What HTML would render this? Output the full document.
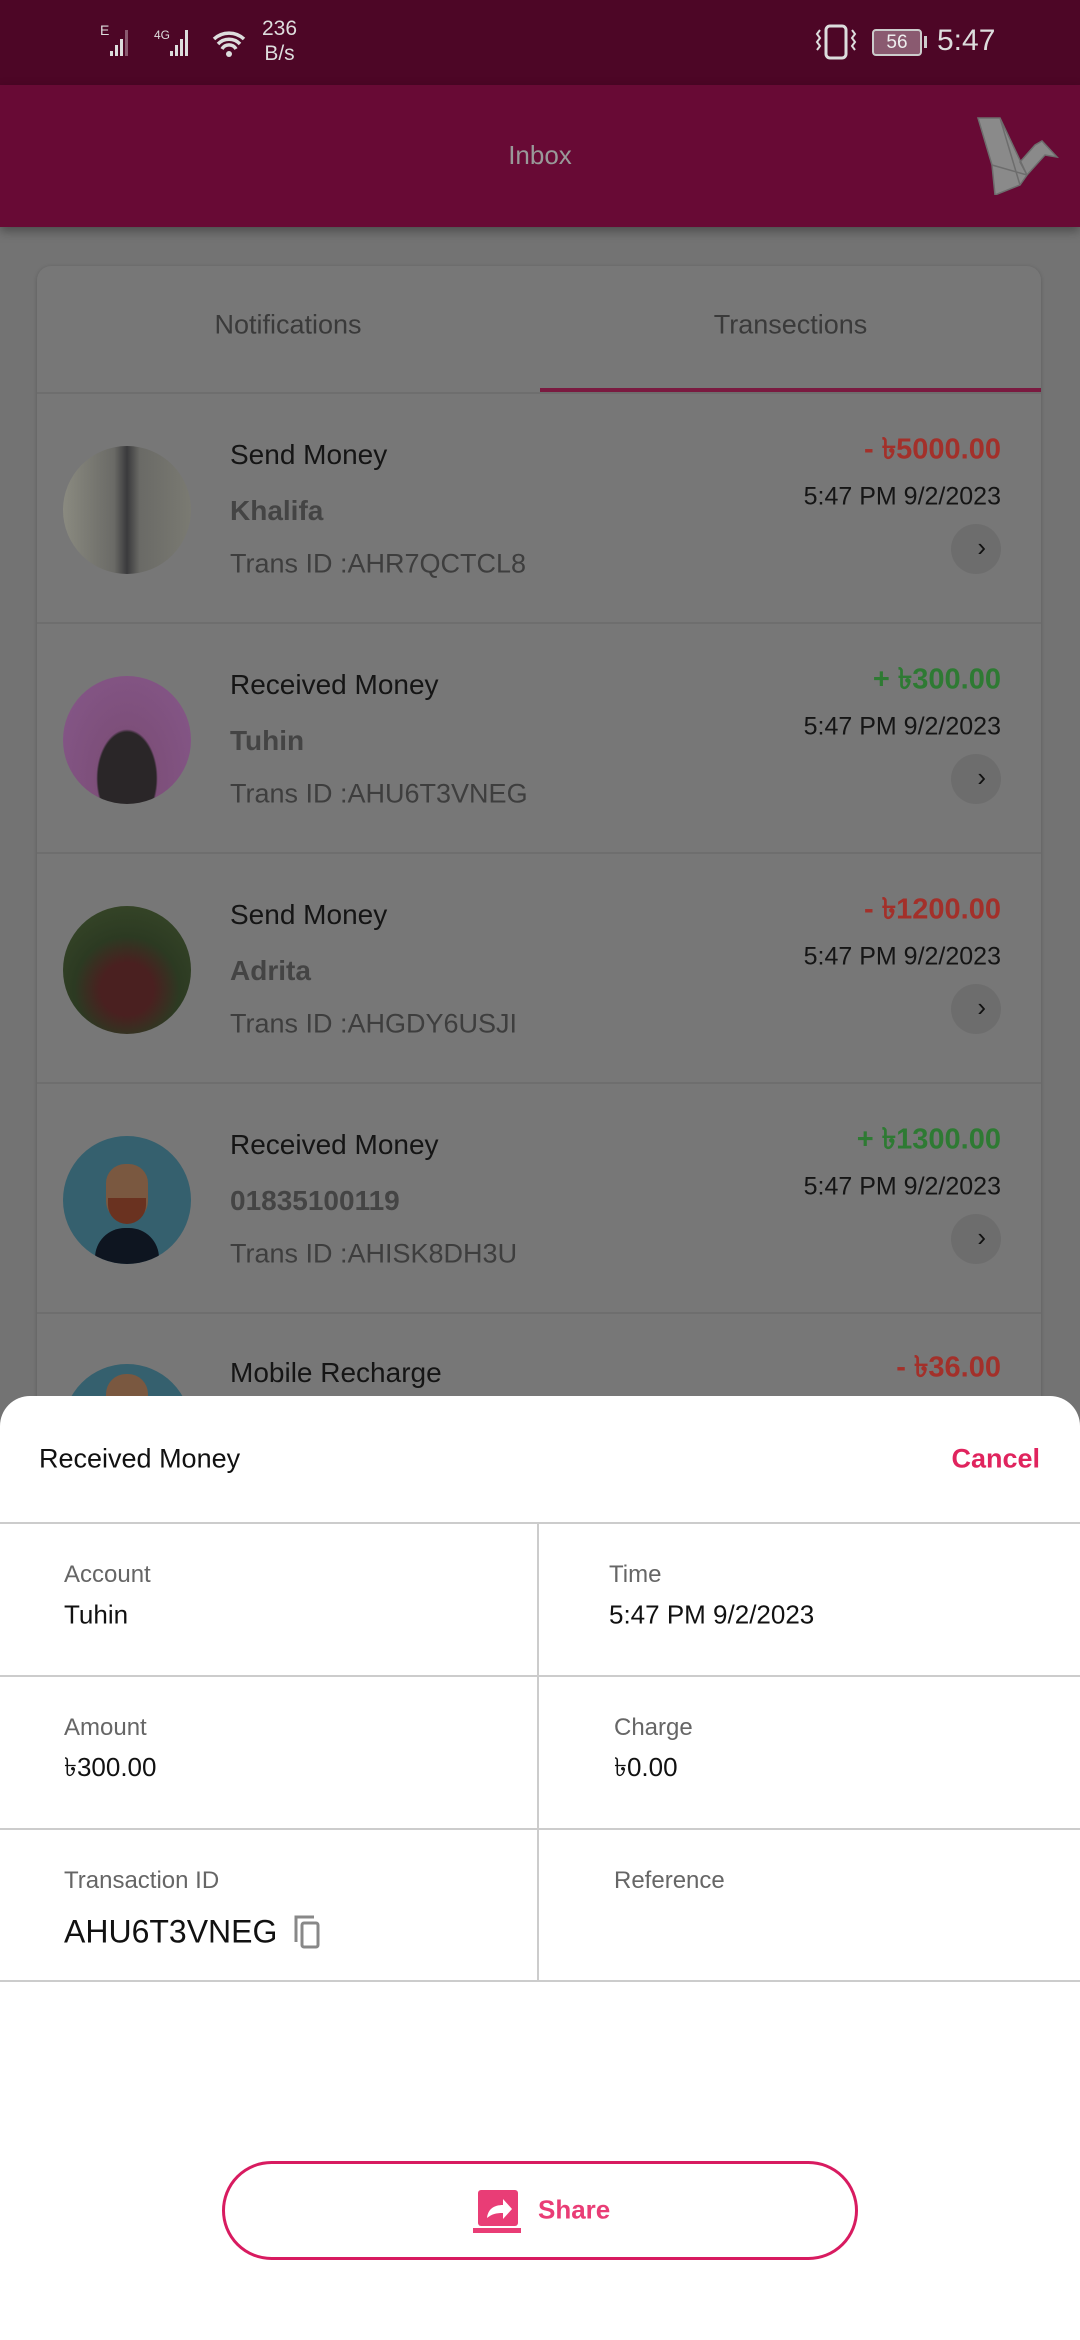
<!DOCTYPE html>
<html><head><meta charset="utf-8"><style>
*{margin:0;padding:0;box-sizing:border-box}
body{width:1080px;height:2340px;position:relative;overflow:hidden;background:#737373;font-family:"Liberation Sans","DejaVu Sans",sans-serif}
.a{position:absolute;white-space:nowrap}
.card{position:absolute;left:37px;top:266px;width:1004px;height:1200px;background:#777;border-radius:14px;box-shadow:0 1px 4px rgba(0,0,0,.2)}
.row{position:absolute;left:37px;width:1004px;height:230px;border-top:2px solid #6e6e6e}
.av{position:absolute;left:26px;top:52px;width:128px;height:128px;border-radius:50%;overflow:hidden}
.t{left:193px;font-size:28px;color:#151515;transform:translateY(-50%)}
.n{left:193px;font-size:28px;color:#444;font-weight:bold;transform:translateY(-50%)}
.id{left:193px;font-size:27px;color:#3e3e3e;transform:translateY(-50%)}
.amt{right:40px;font-size:29px;font-weight:bold;transform:translateY(-50%)}
.dt{right:40px;font-size:25px;color:#151515;transform:translateY(-50%)}
.ch{position:absolute;right:40px;width:50px;height:50px;border-radius:50%;background:#6d6d6d}
.lbl{font-size:24px;color:#666;transform:translateY(-50%)}
.val{font-size:26px;color:#111;transform:translateY(-50%)}
</style></head><body>
<div class="a" style="left:0;top:0;width:1080px;height:85px;background:#4d0626"></div>
<div class="a" style="left:100px;top:22px;font-size:14px;color:#ddd">E</div>
<svg class="a" style="left:106px;top:25px" width="140" height="36"><g fill="#ddd"><rect x="4" y="26" width="3" height="5"/><rect x="9" y="20" width="3" height="11"/><rect x="14" y="14" width="3" height="17"/><rect x="19" y="5" width="3" height="26" fill="#8a5a70"/><rect x="64" y="26" width="3" height="5"/><rect x="69" y="20" width="3" height="11"/><rect x="74" y="14" width="3" height="17"/><rect x="79" y="5" width="3" height="26"/></g><text x="48" y="14" font-size="12" fill="#ddd" font-family="Liberation Sans">4G</text><path d="M108 14a22 22 0 0 1 30 0M112 19a15 15 0 0 1 22 0M116 24a8 8 0 0 1 14 0" stroke="#ddd" stroke-width="3.5" fill="none"/><circle cx="123" cy="29" r="3" fill="#ddd"/></svg>
<div class="a" style="left:262px;top:16px;font-size:21px;color:#ddd;line-height:25px;text-align:center">236<br>B/s</div>
<svg class="a" style="left:815px;top:24px" width="50" height="36"><rect x="11" y="2" width="20" height="32" rx="4" stroke="#ddd" stroke-width="3" fill="none"/><path d="M5 6l-3 4 3 4-3 4 3 4-3 4M37 6l3 4-3 4 3 4-3 4 3 4" stroke="#ddd" stroke-width="2" fill="none"/></svg>
<div class="a" style="left:872px;top:29px;width:50px;height:27px;border:2px solid #ccc;border-radius:4px;background:#8a5a70;color:#eee;font-size:19px;text-align:center;line-height:23px">56</div>
<div class="a" style="left:924px;top:36px;width:3px;height:12px;background:#ccc"></div>
<div class="a" style="left:937px;top:24px;font-size:30px;color:#ddd">5:47</div>
<div class="a" style="left:0;top:85px;width:1080px;height:142px;background:#680a35;box-shadow:0 4px 10px rgba(0,0,0,.35)"></div>
<div class="a" style="left:0;top:140px;width:1080px;text-align:center;font-size:26px;color:#999">Inbox</div>
<svg class="a" style="left:975px;top:115px" width="85" height="80"><path d="M3 3L25 3 52 60 45 70 20 80 17 50Z M25 3 45 70 M17 50 52 60 M45 47 60 30 67 26 82 42 70 40 52 60Z" fill="#8a8a8a" stroke="#6d6d6d" stroke-width="1.5"/></svg>
<div class="card"></div>
<div class="a" style="left:37px;top:325px;width:502px;text-align:center;font-size:27px;color:#3a3a3a;transform:translateY(-50%)">Notifications</div>
<div class="a" style="left:540px;top:325px;width:501px;text-align:center;font-size:27px;color:#3a3a3a;transform:translateY(-50%)">Transections</div>
<div class="a" style="left:540px;top:388px;width:501px;height:4px;background:#7a1a40"></div>

<div class="row" style="top:392px">
<div class="av" style="background:linear-gradient(90deg,#8a8a80,#6a6a66 40%,#3a3a3c 50%,#6a6a66 60%,#7a7a72)"></div>
<div class="a t" style="top:61px">Send Money</div><div class="a n" style="top:117px">Khalifa</div><div class="a id" style="top:170px">Trans ID :AHR7QCTCL8</div>
<div class="a amt" style="top:57px;color:#a3302a">- ৳5000.00</div><div class="a dt" style="top:103px">5:47 PM 9/2/2023</div>
<div class="ch" style="top:130px"></div><div class="a" style="right:55px;top:138px;font-size:26px;color:#111">›</div></div>

<div class="row" style="top:622px">
<div class="av" style="background:radial-gradient(ellipse at 50% 80%,#2a2628 32%,#7d4f7a 34%,#86588a)"></div>
<div class="a t" style="top:61px">Received Money</div><div class="a n" style="top:117px">Tuhin</div><div class="a id" style="top:170px">Trans ID :AHU6T3VNEG</div>
<div class="a amt" style="top:57px;color:#2e7a33">+ ৳300.00</div><div class="a dt" style="top:103px">5:47 PM 9/2/2023</div>
<div class="ch" style="top:130px"></div><div class="a" style="right:55px;top:138px;font-size:26px;color:#111">›</div></div>

<div class="row" style="top:852px">
<div class="av" style="background:radial-gradient(circle at 50% 65%,#4a2020 25%,#2c3a22 50%,#3a4a2a)"></div>
<div class="a t" style="top:61px">Send Money</div><div class="a n" style="top:117px">Adrita</div><div class="a id" style="top:170px">Trans ID :AHGDY6USJI</div>
<div class="a amt" style="top:57px;color:#a3302a">- ৳1200.00</div><div class="a dt" style="top:103px">5:47 PM 9/2/2023</div>
<div class="ch" style="top:130px"></div><div class="a" style="right:55px;top:138px;font-size:26px;color:#111">›</div></div>

<div class="row" style="top:1082px">
<div class="av" style="background:#35606e"><div class="a" style="left:32px;top:92px;width:64px;height:50px;border-radius:30px 30px 0 0;background:#0e1520"></div><div class="a" style="left:43px;top:28px;width:42px;height:58px;border-radius:20px 20px 22px 22px;background:#7a5840"></div><div class="a" style="left:45px;top:62px;width:38px;height:26px;border-radius:0 0 20px 20px;background:#6a3220"></div></div>
<div class="a t" style="top:61px">Received Money</div><div class="a n" style="top:117px">01835100119</div><div class="a id" style="top:170px">Trans ID :AHISK8DH3U</div>
<div class="a amt" style="top:57px;color:#2e7a33">+ ৳1300.00</div><div class="a dt" style="top:103px">5:47 PM 9/2/2023</div>
<div class="ch" style="top:130px"></div><div class="a" style="right:55px;top:138px;font-size:26px;color:#111">›</div></div>

<div class="row" style="top:1312px">
<div class="av" style="background:#35606e;top:50px"><div class="a" style="left:43px;top:10px;width:42px;height:58px;border-radius:20px;background:#7a5840"></div></div>
<div class="a t" style="top:59px">Mobile Recharge</div>
<div class="a amt" style="top:55px;color:#a3302a">- ৳36.00</div></div>

<div class="a" style="left:0;top:1396px;width:1080px;height:944px;background:#fff;border-radius:30px 30px 0 0"></div>
<div class="a" style="left:39px;top:1459px;font-size:27px;color:#111;transform:translateY(-50%)">Received Money</div>
<div class="a" style="right:40px;top:1459px;font-size:27px;color:#e0245e;font-weight:bold;transform:translateY(-50%)">Cancel</div>
<div class="a" style="left:0;top:1522px;width:1080px;height:2px;background:#ccc"></div>
<div class="a" style="left:0;top:1675px;width:1080px;height:2px;background:#ccc"></div>
<div class="a" style="left:0;top:1828px;width:1080px;height:2px;background:#ccc"></div>
<div class="a" style="left:0;top:1980px;width:1080px;height:2px;background:#ccc"></div>
<div class="a" style="left:537px;top:1523px;width:2px;height:458px;background:#ccc"></div>
<div class="a lbl" style="left:64px;top:1575px">Account</div><div class="a val" style="left:64px;top:1615px">Tuhin</div>
<div class="a lbl" style="left:609px;top:1575px">Time</div><div class="a val" style="left:609px;top:1615px">5:47 PM 9/2/2023</div>
<div class="a lbl" style="left:64px;top:1728px">Amount</div><div class="a val" style="left:64px;top:1769px">৳300.00</div>
<div class="a lbl" style="left:614px;top:1728px">Charge</div><div class="a val" style="left:614px;top:1769px">৳0.00</div>
<div class="a lbl" style="left:64px;top:1881px">Transaction ID</div><div class="a val" style="left:64px;top:1932px;font-size:32px">AHU6T3VNEG</div>
<svg class="a" style="left:293px;top:1914px" width="30" height="36"><path d="M3 28V3h18" stroke="#888" stroke-width="3" fill="none"/><rect x="9" y="9" width="16" height="24" rx="2" stroke="#888" stroke-width="3" fill="none"/></svg>
<div class="a lbl" style="left:614px;top:1881px">Reference</div>
<div class="a" style="left:222px;top:2161px;width:636px;height:99px;border:3px solid #d81b60;border-radius:50px"></div>
<svg class="a" style="left:473px;top:2190px" width="56" height="44"><rect x="5" y="0" width="40" height="36" rx="3" fill="#e93d76"/><rect x="0" y="38" width="48" height="5" fill="#e93d76"/><path d="M14 28c1-9 7-13 16-13v-6l9 10-9 10v-6c-7 0-11 1-16 5z" fill="#fff"/></svg>
<div class="a" style="left:538px;top:2210px;font-size:26px;color:#e93d76;font-weight:bold;transform:translateY(-50%)">Share</div>
</body></html>
